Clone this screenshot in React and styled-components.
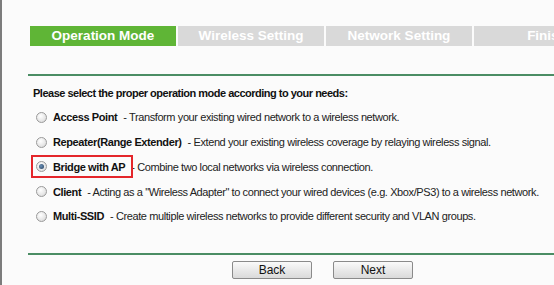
import React from 'react';
import styled, { createGlobalStyle } from 'styled-components';

const GlobalStyle = createGlobalStyle`
  html, body {
    margin: 0;
    padding: 0;
    background: #fbfbfb;
  }
  body {
    font-family: "Liberation Sans", Arial, sans-serif;
  }
`;

const steps = ['Operation Mode', 'Wireless Setting', 'Network Setting', 'Finish'];

const options = [
  { name: 'Access Point', text: '- Transform your existing wired network to a wireless network.' },
  { name: 'Repeater(Range Extender)', text: '- Extend your existing wireless coverage by relaying wireless signal.' },
  { name: 'Bridge with AP', text: '- Combine two local networks via wireless connection.', checked: true },
  { name: 'Client', text: '- Acting as a "Wireless Adapter" to connect your wired devices (e.g. Xbox/PS3) to a wireless network.' },
  { name: 'Multi-SSID', text: '- Create multiple wireless networks to provide different security and VLAN groups.' },
];

const Page = styled.div`
  width: 554px;
  height: 285px;
  box-sizing: border-box;
  border-left: 2px solid #7c7c7c;
  overflow: hidden;
  background: #fbfbfb;
`;

const Content = styled.div`
  width: 700px;
  padding: 26px 0 0 26px;
`;

const Tabs = styled.div`
  display: flex;
  gap: 2px;
  padding-left: 2px;
`;

const Tab = styled.div`
  width: 146px;
  height: 20px;
  flex: none;
  background: ${p => (p.$active ? '#5fb536' : '#d9d9d9')};
  color: #fff;
  font-weight: bold;
  font-size: 13.5px;
  line-height: 20px;
  text-align: center;
`;

const Rule = styled.div`
  height: 2px;
  background: #4b8d64;
  margin-top: ${p => p.$top}px;
`;

const Prompt = styled.div`
  margin: 10px 0 0 5px;
  font-size: 11px;
  letter-spacing: -0.5px;
  font-weight: bold;
  color: #111;
  line-height: 14px;
`;

const OptionList = styled.div`
  display: flex;
  flex-direction: column;
  margin: 5px 0 0 8px;
`;

const Row = styled.div`
  height: 24.75px;
  display: flex;
  align-items: center;
  font-size: 11px;
  letter-spacing: -0.4px;
  color: #222;
  white-space: nowrap;
`;

const Choice = styled.span`
  position: relative;
  display: inline-flex;
  align-items: center;
  gap: 6px;
  ${p => p.$marked && `
    &::after {
      content: '';
      position: absolute;
      left: -5px;
      right: -8px;
      top: -6px;
      bottom: -5px;
      border: 2px solid #e4262b;
    }
  `}
`;

const Radio = styled.span`
  width: 9px;
  height: 9px;
  border-radius: 50%;
  border: 1px solid #9a9a9a;
  background: radial-gradient(circle at 40% 35%, #ffffff 0%, #e6e6e6 60%, #cfcfcf 100%);
  display: inline-flex;
  align-items: center;
  justify-content: center;
  &::before {
    content: '';
    width: 5px;
    height: 5px;
    border-radius: 50%;
    background: ${p => (p.$checked ? 'radial-gradient(circle at 40% 40%, #6a8fb5, #243e5c)' : 'transparent')};
  }
`;

const Name = styled.b`
  color: #111;
`;

const Desc = styled.span`
  margin-left: 6px;
`;

const Buttons = styled.div`
  display: flex;
  gap: 21px;
  margin: 6px 0 0 204px;
`;

const Button = styled.button`
  width: 80px;
  height: 18px;
  padding: 0;
  border: 1px solid #8a8a8a;
  border-radius: 2px;
  background: linear-gradient(#fafafa, #e9e9e9 50%, #dadada);
  font-family: "Liberation Sans", Arial, sans-serif;
  font-size: 12px;
  color: #111;
`;

export default function App() {
  return (
    <>
      <GlobalStyle />
      <Page>
        <Content>
          <Tabs>
            {steps.map((s, i) => (
              <Tab key={s} $active={i === 0}>{s}</Tab>
            ))}
          </Tabs>
          <Rule $top={28} />
          <Prompt>Please select the proper operation mode according to your needs:</Prompt>
          <OptionList>
            {options.map(o => (
              <Row key={o.name}>
                <Choice $marked={o.checked}>
                  <Radio $checked={o.checked} />
                  <Name>{o.name}</Name>
                </Choice>
                <Desc>{o.text}</Desc>
              </Row>
            ))}
          </OptionList>
          <Rule $top={24} />
          <Buttons>
            <Button>Back</Button>
            <Button>Next</Button>
          </Buttons>
        </Content>
      </Page>
    </>
  );
}
